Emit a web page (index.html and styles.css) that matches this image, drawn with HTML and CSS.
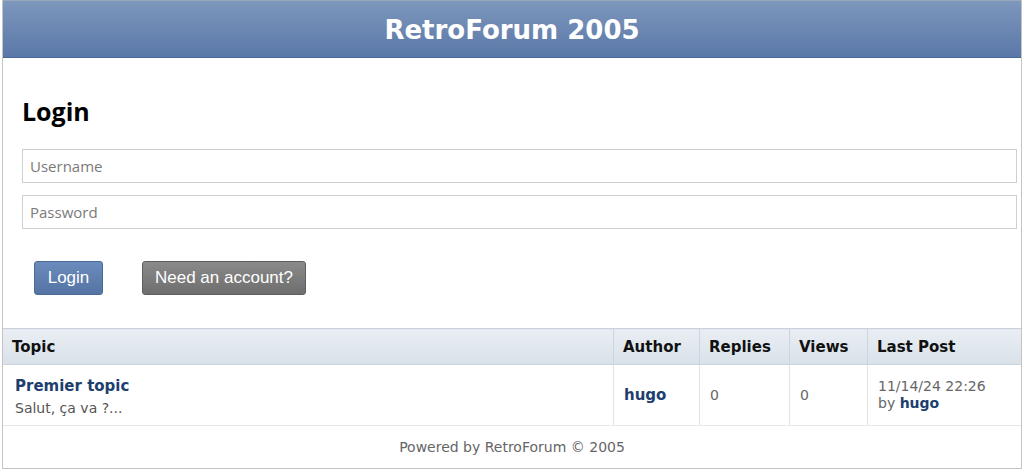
FILE: index.html
```html
<!DOCTYPE html>
<html lang="en">
<head>
<meta charset="utf-8">
<title>RetroForum 2005</title>
<link rel="stylesheet" href="styles.css">
</head>
<body>
<div class="page">
  <header class="masthead">RetroForum 2005</header>
  <section class="login">
    <h2 class="login-title">Login</h2>
    <input class="field" type="text" placeholder="Username">
    <input class="field" type="password" placeholder="Password">
    <div class="actions">
      <button class="btn btn-primary">Login</button>
      <button class="btn btn-secondary">Need an account?</button>
    </div>
  </section>
  <table class="topics">
    <thead>
      <tr>
        <th class="c-topic">Topic</th>
        <th class="c-author">Author</th>
        <th class="c-replies">Replies</th>
        <th class="c-views">Views</th>
        <th class="c-last">Last Post</th>
      </tr>
    </thead>
    <tbody>
      <tr>
        <td class="c-topic">
          <a class="topic-link" href="#">Premier topic</a>
          <div class="excerpt">Salut, ça va ?...</div>
        </td>
        <td class="c-author"><a class="user" href="#">hugo</a></td>
        <td class="num">0</td>
        <td class="num">0</td>
        <td class="last">11/14/24 22:26<br>by <a class="user" href="#">hugo</a></td>
      </tr>
    </tbody>
  </table>
  <footer class="foot">Powered by RetroForum © 2005</footer>
</div>
</body>
</html>
```

FILE: styles.css
```css
html, body {
  margin: 0;
  padding: 0;
  background: #fff;
}
body {
  font-family: "DejaVu Sans", Verdana, sans-serif;
}
.page {
  width: 1018px;
  margin: 0 auto;
  border: 1px solid #c4c4c4;
  border-top: none;
  background: #fff;
}
.masthead {
  box-sizing: border-box;
  height: 58px;
  line-height: 58px;
  text-align: center;
  color: #fff;
  font-weight: bold;
  font-size: 26px;
  background: linear-gradient(#7d97bc, #5a78a8);
  border-top: 1px solid #9aa8bb;
  border-bottom: 1px solid #48679a;
}
.login {
  padding: 37px 4px 33px 19px;
  display: flex;
  flex-direction: column;
}
.login-title {
  margin: 0 0 21px 0;
  font-family: "Open Sans", sans-serif;
  font-size: 25px;
  font-weight: bold;
  color: #000;
  line-height: 33px;
}
.field {
  height: 34px;
  box-sizing: border-box;
  margin: 0 0 12px 0;
  border: 1px solid #cfcfcf;
  padding: 0 7px;
  font-family: "Open Sans", sans-serif;
  font-size: 15px;
  color: #333;
  background: #fff;
}
.field::placeholder {
  color: #7a7a7a;
}
.actions {
  display: flex;
  gap: 39px;
  padding: 20px 0 0 12px;
}
.btn {
  height: 34px;
  box-sizing: border-box;
  font-family: "Liberation Sans", Arial, sans-serif;
  font-size: 17px;
  color: #fff;
  border-radius: 3px;
  padding: 0 12px;
}
.btn-primary {
  width: 69px;
  background: linear-gradient(#6a8bbb, #5474a4);
  border: 1px solid #4c6a98;
}
.btn-secondary {
  width: 164px;
  background: linear-gradient(#8a8a8a, #6e6e6e);
  border: 1px solid #5e5e5e;
}
.topics {
  width: 100%;
  border-collapse: collapse;
  font-size: 14px;
}
.topics th {
  text-align: left;
  font-size: 15px;
  font-weight: bold;
  color: #111;
  height: 35px;
  padding: 0 9px;
  background: linear-gradient(#e9eef3, #d9e1e9);
  border-top: 1px solid #c9d2dc;
  border-bottom: 1px solid #cbd4dd;
  border-left: 1px solid #cdd6df;
}
.topics th:first-child, .topics td:first-child {
  border-left: none;
}
.topics td {
  height: 60px;
  padding: 0 10px;
  border-left: 1px solid #e2e2e2;
  border-bottom: 1px solid #e8e8e8;
  color: #666;
  vertical-align: middle;
}
.topics td.c-topic {
  padding: 0 12px;
}
.c-author { width: 65px; }
.c-replies { width: 71px; }
.c-views { width: 59px; }
.c-last { width: 135px; }
.topic-link {
  display: block;
  font-size: 15px;
  font-weight: bold;
  color: #1d3f6e;
  text-decoration: none;
  margin-top: 2px;
  line-height: 20px;
}
.excerpt {
  color: #555;
  font-size: 14px;
  margin-top: 3px;
  line-height: 18px;
}
.user {
  color: #1d3f6e;
  font-weight: bold;
  text-decoration: none;
}
.c-author .user {
  font-size: 15px;
}
.num {
  color: #6c6c6c;
}
.last {
  color: #777;
  line-height: 17px;
  padding-top: 4px;
}
.foot {
  text-align: center;
  color: #666;
  font-size: 14px;
  height: 42px;
  line-height: 42px;
}
```
